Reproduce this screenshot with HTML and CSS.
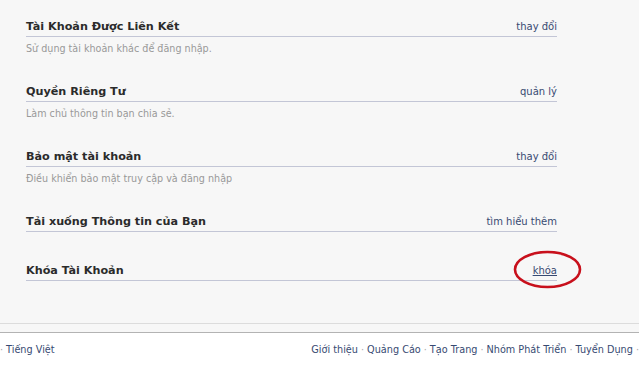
FILE: index.html
```html
<!DOCTYPE html>
<html lang="vi">
<head>
<meta charset="utf-8">
<title>Cài đặt tài khoản</title>
<link rel="stylesheet" href="styles.css">
</head>
<body>
<div class="page">
  <div class="content">
    <div class="row">
      <div class="head"><span class="title">Tài Khoản Được Liên Kết</span><a class="link" href="#">thay đổi</a></div>
      <div class="desc">Sử dụng tài khoản khác để đăng nhập.</div>
    </div>
    <div class="row">
      <div class="head"><span class="title">Quyền Riêng Tư</span><a class="link" href="#">quản lý</a></div>
      <div class="desc">Làm chủ thông tin bạn chia sẻ.</div>
    </div>
    <div class="row">
      <div class="head"><span class="title">Bảo mật tài khoản</span><a class="link" href="#">thay đổi</a></div>
      <div class="desc">Điều khiển bảo mật truy cập và đăng nhập</div>
    </div>
    <div class="row">
      <div class="head"><span class="title">Tải xuống Thông tin của Bạn</span><a class="link" href="#">tìm hiểu thêm</a></div>
    </div>
    <div class="row">
      <div class="head"><span class="title">Khóa Tài Khoản</span>
        <span class="mark"><a class="link underline" href="#">khóa</a>
          <svg class="circle" width="70" height="40" viewBox="0 0 70 40"><ellipse cx="34.5" cy="19.5" rx="32.5" ry="17.5" fill="none" stroke="#c8101c" stroke-width="2.6"/></svg>
        </span>
      </div>
    </div>
  </div>
  <div class="spacer"></div>
  <div class="footer">
    <div class="f-left"><span class="dot">·</span><a href="#">Tiếng Việt</a></div>
    <div class="f-right">
      <a href="#">Giới thiệu</a><span class="dot">·</span><a href="#">Quảng Cáo</a><span class="dot">·</span><a href="#">Tạo Trang</a><span class="dot">·</span><a href="#">Nhóm Phát Triển</a><span class="dot">·</span><a href="#">Tuyển Dụng</a><span class="dot">·</span>
    </div>
  </div>
</div>
</body>
</html>
```
FILE: styles.css
```css
html, body {
  margin: 0;
  padding: 0;
  background: #ffffff;
}
body {
  font-family: "DejaVu Sans", "Noto Sans", sans-serif;
  width: 639px;
  height: 366px;
  overflow: hidden;
}
a { text-decoration: none; }
.page {
  display: flex;
  flex-direction: column;
}
.content {
  background: #f7f7f7;
  padding: 17px 0 0 26px;
  height: 324px;
  box-sizing: border-box;
  border-bottom: 1px solid #dcdcdc;
}
.row {
  width: 531px;
  margin-bottom: 29px;
}
.head {
  display: flex;
  justify-content: space-between;
  align-items: flex-end;
  height: 18px;
  border-bottom: 1px solid #c3c6d6;
  padding-bottom: 1px;
}
.head > * { line-height: 16px; display: block; }
.title {
  font-size: 11.2px;
  font-weight: bold;
  color: #2b2b2b;
}
.link {
  font-size: 10px;
  color: #374a72;
}
.underline { text-decoration: underline; }
.desc {
  margin-top: 6px;
  margin-bottom: -2px;
  font-size: 9.6px;
  line-height: 12px;
  color: #999999;
}
.mark {
  position: relative;
}
.circle {
  position: absolute;
  left: -20px;
  top: -11px;
}
.spacer {
  height: 8px;
  background: #f7f7f7;
  border-bottom: 1px solid #b3b3b3;
}
.footer {
  display: flex;
  justify-content: space-between;
  padding-top: 10px;
  font-size: 9.7px;
  line-height: 14px;
  white-space: nowrap;
}
.footer a { color: #374a72; }
.f-left { padding-left: 0; }
.dot {
  color: #aaaaaa;
  padding: 0 3px;
}
.f-left .dot { padding: 0 3px 0 0; }
.f-right { margin-right: -3px; }
```
